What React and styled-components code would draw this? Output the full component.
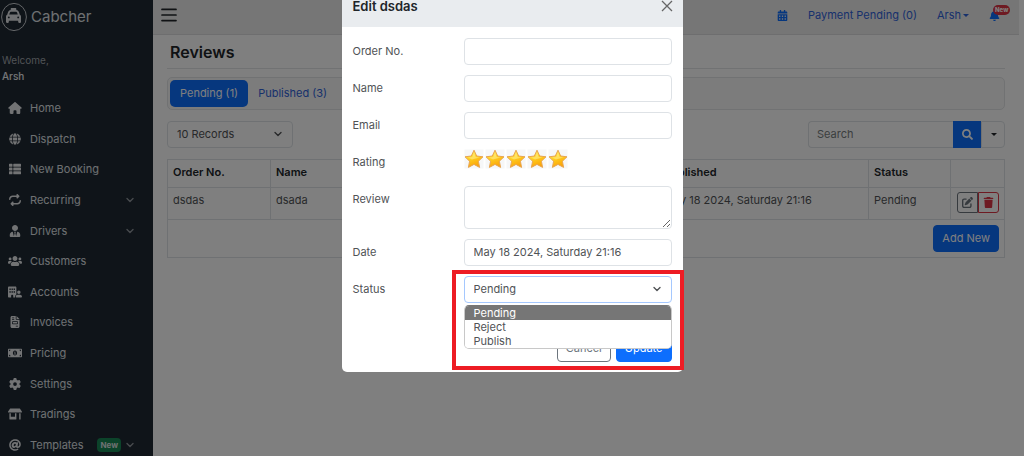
import React, { useState } from "react";
import styled, { createGlobalStyle } from "styled-components";
import {
	FaBuildingUser,
	FaFileInvoice,
	FaGear,
	FaHouse,
	FaPenToSquare,
	FaRepeat,
	FaTaxi,
	FaTrash,
} from "react-icons/fa6";
import {
	FaAt,
	FaBell,
	FaCalendarAlt,
	FaGlobe,
	FaMoneyBillAlt,
	FaSearch,
	FaStoreAlt,
	FaThList,
	FaUserTie,
	FaUsers,
} from "react-icons/fa";

const links = [
	{ label: "Home", icon: FaHouse },
	{ label: "Dispatch", icon: FaGlobe },
	{ label: "New Booking", icon: FaThList },
	{ label: "Recurring", icon: FaRepeat, more: true },
	{ label: "Drivers", icon: FaUserTie, more: true },
	{ label: "Customers", icon: FaUsers },
	{ label: "Accounts", icon: FaBuildingUser },
	{ label: "Invoices", icon: FaFileInvoice },
	{ label: "Pricing", icon: FaMoneyBillAlt },
	{ label: "Settings", icon: FaGear },
	{ label: "Tradings", icon: FaStoreAlt },
	{ label: "Templates", icon: FaAt, more: true, badge: "New" },
];

const statuses = ["Pending", "Reject", "Publish"];

const Chevron = () => (
	<svg width="8" height="8" viewBox="0 0 8 8" fill="none" stroke="currentColor">
		<path
			d="M1 2.4 4 5.4 7 2.4"
			strokeWidth="1.4"
			strokeLinecap="round"
			strokeLinejoin="round"
		/>
	</svg>
);

const Star = () => (
	<svg width="20" height="20" viewBox="0 0 20 20">
		<rect x="0.5" y="0.5" width="19" height="19" fill="#f6f7f8" />
		<path
			d="M10 1.2 12.7 7 19 7.8 14.4 12.2 15.6 18.4 10 15.4 4.4 18.4 5.6 12.2 1 7.8 7.3 7Z"
			fill="url(#gold)"
			stroke="#e8a552"
			strokeWidth="1"
			strokeLinejoin="round"
		/>
		<path d="M10 3.4 11.8 7.9 15.6 8.6 8 10.6 4 8.6 8.2 7.9Z" fill="#fff3a0" opacity="0.5" />
	</svg>
);

const App = () => {
	const [status, setStatus] = useState("Pending");

	return (
		<React.Fragment>
			<GlobalStyle />
			<Page>
				<Sidebar>
					<Brand href="#home">
						<Logo viewBox="0 0 28 30">
							<ellipse cx="14" cy="15" rx="12.4" ry="13.6" />
							<FaTaxi x="6" y="6" width="16" height="17" />
						</Logo>
						Cabcher
					</Brand>
					<Welcome>
						Welcome,
						<strong>Arsh</strong>
					</Welcome>
					<Menu>
						{links.map(({ label, icon: Icon, more, badge }) => (
							<li key={label}>
								<MenuLink href="#menu">
									<Icon />
									<span>{label}</span>
									{badge && <Badge>{badge}</Badge>}
									{more && <Chevron />}
								</MenuLink>
							</li>
						))}
					</Menu>
				</Sidebar>

				<Main>
					<TopBar>
						<Burger aria-label="Toggle menu">
							<svg width="16" height="16" viewBox="0 0 16 16" stroke="currentColor">
								<path
									d="M1 2.4H15M1 8H15M1 13.6H15"
									strokeWidth="1.7"
									strokeLinecap="round"
								/>
							</svg>
						</Burger>
						<TopLinks>
							<a href="#calendar" aria-label="Calendar">
								<FaCalendarAlt />
							</a>
							<a href="#payments">Payment Pending (0)</a>
							<a href="#account">
								Arsh
								<Caret />
							</a>
							<BellLink href="#alerts" aria-label="Alerts">
								<FaBell />
								<BellBadge>New</BellBadge>
							</BellLink>
						</TopLinks>
					</TopBar>
					<Content>
						<Title>Reviews</Title>
						<Tabs>
							<Tab $active>Pending (1)</Tab>
							<Tab>Published (3)</Tab>
						</Tabs>
						<Filters>
							<SelectWrap $width="126px">
								<Select aria-label="Records per page" defaultValue="10 Records">
									<option>10 Records</option>
								</Select>
								<Chevron />
							</SelectWrap>
							<SearchGroup>
								<SearchInput aria-label="Search" placeholder="Search" />
								<SearchButton aria-label="Search">
									<FaSearch />
								</SearchButton>
								<MoreButton aria-label="Search options">
									<Caret />
								</MoreButton>
							</SearchGroup>
						</Filters>
						<Table>
							<thead>
								<tr>
									<Th $width="103px">Order No.</Th>
									<Th>Name</Th>
									<Th $width="210px">Published</Th>
									<Th $width="82px">Status</Th>
									<Th $width="54px"></Th>
								</tr>
							</thead>
							<tbody>
								<tr>
									<td>dsdas</td>
									<td>dsada</td>
									<td>May 18 2024, Saturday 21:16</td>
									<td>Pending</td>
									<td>
										<Actions>
											<ActionButton aria-label="Edit">
												<FaPenToSquare />
											</ActionButton>
											<ActionButton $danger aria-label="Delete">
												<FaTrash />
											</ActionButton>
										</Actions>
									</td>
								</tr>
								<tr>
									<AddCell colSpan={5}>
										<Button $primary>Add New</Button>
									</AddCell>
								</tr>
							</tbody>
						</Table>
					</Content>
				</Main>
			</Page>

			<Backdrop>
				<Dialog role="dialog" aria-labelledby="dialog-title">
					<DialogHeader>
						<h2 id="dialog-title">Edit dsdas</h2>
						<Close aria-label="Close">
							<svg width="12" height="12" viewBox="0 0 12 12" stroke="currentColor">
								<path d="M1 1 11 11M11 1 1 11" strokeWidth="1.3" />
							</svg>
						</Close>
					</DialogHeader>
					<Form onSubmit={(e) => e.preventDefault()}>
						<Field>
							<label htmlFor="order">Order No.</label>
							<Input id="order" />
						</Field>
						<Field>
							<label htmlFor="name">Name</label>
							<Input id="name" />
						</Field>
						<Field>
							<label htmlFor="email">Email</label>
							<Input id="email" />
						</Field>
						<Field>
							<span>Rating</span>
							<Stars role="img" aria-label="5 stars">
								<svg width="0" height="0">
									<defs>
										<linearGradient id="gold" x1="0" y1="0" x2="0.4" y2="1">
											<stop offset="0" stopColor="#fff27a" />
											<stop offset="0.5" stopColor="#ffd01f" />
											<stop offset="1" stopColor="#fba50a" />
										</linearGradient>
									</defs>
								</svg>
								{[1, 2, 3, 4, 5].map((i) => (
									<Star key={i} />
								))}
							</Stars>
						</Field>
						<Field>
							<label htmlFor="review">Review</label>
							<Textarea id="review" />
						</Field>
						<Field>
							<label htmlFor="date">Date</label>
							<Input id="date" defaultValue="May 18 2024, Saturday 21:16" />
						</Field>
						<Field>
							<label htmlFor="status">Status</label>
							<SelectWrap $focused>
								<Select
									id="status"
									value={status}
									onChange={(e) => setStatus(e.target.value)}
								>
									{statuses.map((s) => (
										<option key={s}>{s}</option>
									))}
								</Select>
								<Chevron />
								<Options role="listbox" aria-label="Status">
									{statuses.map((s) => (
										<Option
											key={s}
											role="option"
											aria-selected={s === status}
											$active={s === status}
											onClick={() => setStatus(s)}
										>
											{s}
										</Option>
									))}
								</Options>
								<Highlight />
							</SelectWrap>
						</Field>
						<Footer>
							<Button type="button">Cancel</Button>
							<Button $primary type="submit">
								Update
							</Button>
						</Footer>
					</Form>
				</Dialog>
			</Backdrop>
		</React.Fragment>
	);
};

const GlobalStyle = createGlobalStyle`
	* {
		box-sizing: border-box;
	}
	body {
		margin: 0;
		overflow: hidden;
		background: #fff;
		color: #505356;
		font-family: Inter, "Liberation Sans", sans-serif;
		font-size: 11px;
		line-height: 16px;
	}
	button, input, select, textarea {
		margin: 0;
		font: inherit;
		color: inherit;
	}
	a {
		color: inherit;
		text-decoration: none;
	}
`;

const Page = styled.div`
	display: flex;
	min-height: 100vh;
`;

const Sidebar = styled.aside`
	display: flex;
	flex-direction: column;
	flex: 0 0 153px;
	height: 100vh;
	background: #1e2833;
	color: #dee1e4;
`;

const Brand = styled.a`
	display: flex;
	align-items: center;
	gap: 3px;
	padding: 2px 0 0;
	font-size: 15px;
	line-height: 30px;
`;

const Logo = styled.svg`
	width: 28px;
	height: 30px;
	fill: #e6e6e6;

	ellipse {
		fill: none;
		stroke: #c4c8cc;
		stroke-width: 1;
	}
`;

const Welcome = styled.div`
	display: flex;
	flex-direction: column;
	padding: 20px 2px 9px;
	font-size: 10px;
	color: #a0a5aa;

	strong {
		font-weight: 500;
		color: #e9ecef;
	}
`;

const Menu = styled.ul`
	display: grid;
	grid-auto-rows: 1fr;
	flex: 1;
	margin: 0 0 -4px;
	padding: 0;
	list-style: none;
`;

const MenuLink = styled.a`
	display: flex;
	align-items: center;
	height: 100%;
	padding: 0 19px 0 8px;

	> svg {
		color: #8f959b;
	}
	> svg:first-child {
		width: 14px;
		height: 12px;
		color: #e4e6e8;
	}
	span:nth-child(2) {
		flex: 1;
		margin-left: 8px;
	}
`;

const Badge = styled.span`
	margin-right: 5px;
	padding: 0 3px;
	border-radius: 4px;
	background: #198754;
	font-size: 8px;
	font-weight: 700;
	line-height: 14px;
`;

const Main = styled.main`
	flex: 1;
	min-width: 0;
	padding-right: 5px;
`;

const TopBar = styled.header`
	display: flex;
	align-items: center;
	justify-content: space-between;
	height: 35px;
	padding: 0 19px 4px 8px;
	border-bottom: 1px solid #dcdddf;
	background: #ededed;
`;

const Burger = styled.button`
	display: flex;
	padding: 0;
	border: 0;
	background: none;
	color: #212529;
`;

const TopLinks = styled.nav`
	display: flex;
	align-items: center;
	gap: 20px;
	color: #2f62d9;

	a {
		display: flex;
		align-items: center;
	}
	svg {
		color: #0d6efd;
	}
`;

const Caret = styled.span`
	width: 0;
	border: 3px solid transparent;
	border-top-color: currentColor;
	border-bottom: 0;
	margin-left: 2px;
`;

const BellLink = styled.a`
	position: relative;
`;

const BellBadge = styled.span`
	position: absolute;
	top: -5px;
	left: 4px;
	padding: 0 2px;
	border-radius: 5px;
	background: #dc3545;
	color: #fff;
	font-size: 6px;
	font-weight: 800;
	line-height: 10px;
`;

const Content = styled.section`
	padding: 0 14px;
`;

const Title = styled.h1`
	margin: 0 0 8px;
	padding: 5px 3px 4px;
	border-bottom: 1px solid #e3e5e7;
	color: #212529;
	font-size: 16px;
	font-weight: 600;
	line-height: 24px;
`;

const Tabs = styled.div`
	display: flex;
	padding: 2px;
	border: 1px solid #e2e4e6;
	border-radius: 5px;
	background: #f8f8f8;
`;

const Tab = styled.button`
	padding: 6px 10px;
	border: 0;
	border-radius: 5px;
	background: ${(p) => (p.$active ? "#0d6efd" : "none")};
	color: ${(p) => (p.$active ? "#fff" : "#2f62d9")};
	line-height: 15px;
`;

const Filters = styled.div`
	display: flex;
	justify-content: space-between;
	margin: 11px 0;
`;

const SelectWrap = styled.div`
	position: relative;
	width: ${(p) => p.$width || "100%"};

	> svg {
		position: absolute;
		top: 9px;
		right: 11px;
		pointer-events: none;
	}
	> select {
		border-color: ${(p) => (p.$focused ? "#a5c8fe" : "#dee2e6")};
	}
`;

const Select = styled.select`
	display: block;
	appearance: none;
	width: 100%;
	padding: 4px 9px;
	border: 1px solid;
	border-radius: 4px;
	background: #fff;
	line-height: 17px;
	outline: 0;
`;

const SearchGroup = styled.div`
	display: flex;
`;

const SearchInput = styled.input`
	width: 145px;
	padding: 4px 8px;
	border: 1px solid #dee2e6;
	border-right: 0;
	border-radius: 4px 0 0 4px;
	line-height: 17px;

	&::placeholder {
		color: #777c80;
		opacity: 1;
	}
`;

const SearchButton = styled.button`
	display: flex;
	align-items: center;
	justify-content: center;
	width: 28px;
	padding: 0;
	border: 0;
	background: #0d6efd;
	color: #fff;
`;

const MoreButton = styled(SearchButton)`
	width: 24px;
	border: 1px solid #dee2e6;
	border-radius: 0 4px 4px 0;
	background: #fff;
	color: #212529;
`;

const Table = styled.table`
	width: 100%;
	table-layout: fixed;
	border-collapse: collapse;

	th,
	td {
		height: 32px;
		padding: 4px 5px;
		border: 1px solid #dee2e6;
		text-align: left;
		vertical-align: top;
	}
`;

const Th = styled.th`
	&& {
		width: ${(p) => p.$width || "auto"};
		height: 28px;
		color: #212529;
		font-weight: 600;
	}
`;

const Actions = styled.div`
	display: flex;
	justify-content: flex-end;
`;

const ActionButton = styled.button`
	display: flex;
	align-items: center;
	justify-content: center;
	width: 21px;
	height: 21px;
	padding: 0;
	border: 1px solid;
	border-radius: ${(p) => (p.$danger ? "0 3px 3px 0" : "3px 0 0 3px")};
	background: none;
	color: ${(p) => (p.$danger ? "#dc3545" : "#6c757d")};
`;

const AddCell = styled.td`
	&& {
		height: 38px;
		padding: 5px;
		text-align: right;
	}
`;

const Button = styled.button`
	padding: 4px 8px;
	border: 1px solid ${(p) => (p.$primary ? "#0d6efd" : "#6c757d")};
	border-radius: 4px;
	background: ${(p) => (p.$primary ? "#0d6efd" : "#fff")};
	color: ${(p) => (p.$primary ? "#fff" : "#6c757d")};
	line-height: 17px;
`;

const Backdrop = styled.div`
	position: fixed;
	inset: 0;
	display: flex;
	align-items: flex-start;
	justify-content: center;
	background: rgba(0, 0, 0, 0.5);
`;

const Dialog = styled.div`
	width: 341px;
	margin-top: -15px;
	border-radius: 5px;
	background: #fff;
`;

const DialogHeader = styled.div`
	display: flex;
	align-items: center;
	justify-content: space-between;
	height: 42px;
	padding: 0 10px 0 11px;
	background: #e9ecef;

	h2 {
		margin: 0;
		color: #212529;
		font-size: 13px;
		font-weight: 600;
	}
`;

const Close = styled.button`
	display: flex;
	padding: 0;
	border: 0;
	background: none;
	color: #666;
`;

const Form = styled.form`
	display: flex;
	flex-direction: column;
	gap: 10px;
	padding: 11px 11px 10px;
`;

const Field = styled.div`
	display: grid;
	grid-template-columns: 111px 1fr;
	min-height: 27px;

	> :first-child {
		padding-top: 5px;
	}
`;

const Input = styled.input`
	width: 100%;
	padding: 4px 9px;
	border: 1px solid #dee2e6;
	border-radius: 4px;
	line-height: 17px;
`;

const Textarea = styled.textarea`
	display: block;
	width: 100%;
	height: 43px;
	border: 1px solid #dee2e6;
	border-radius: 4px;
`;

const Stars = styled.div`
	display: flex;
	align-items: flex-start;
	gap: 1px;

	svg[width="0"] {
		position: absolute;
	}
`;

const Options = styled.ul`
	position: absolute;
	z-index: 1;
	top: 29px;
	left: 0;
	right: 0;
	margin: 0;
	padding: 0;
	overflow: hidden;
	border: 1px solid #c8c8c8;
	border-top-color: #767676;
	border-radius: 5px;
	background: #fff;
	list-style: none;
`;

const Option = styled.li`
	padding: 0 9px;
	background: ${(p) => (p.$active ? "#767676" : "#fff")};
	color: ${(p) => (p.$active ? "#fff" : "#505356")};
	line-height: 14px;
`;

/* red marker frame round the status field and its list */
const Highlight = styled.div`
	position: absolute;
	z-index: 2;
	inset: -6px -12px -67px;
	border: 4px solid #ed1c24;
	pointer-events: none;
`;

const Footer = styled.div`
	display: flex;
	justify-content: flex-end;
	gap: 5px;
	padding-top: 22px;
`;

export default App;
